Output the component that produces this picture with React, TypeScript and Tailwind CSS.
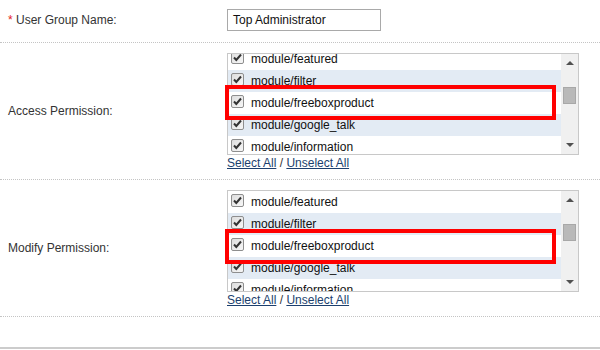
import React from "react";

const items = [
  "module/featured",
  "module/filter",
  "module/freeboxproduct",
  "module/google_talk",
  "module/information",
];

function Check() {
  return (
    <svg width="13" height="13" viewBox="0 0 13 13" className="shrink-0">
      <defs>
        <linearGradient id="cbg" x1="0" y1="0" x2="1" y2="1">
          <stop offset="0" stopColor="#dcdcdc" />
          <stop offset="1" stopColor="#f8f8f8" />
        </linearGradient>
      </defs>
      <rect x="0.5" y="0.5" width="12" height="12" rx="1.5" fill="url(#cbg)" stroke="#8e8e8e" />
      <path d="M3 6.5 L5.3 9 L10 3.5" fill="none" stroke="#333" strokeWidth="2" />
    </svg>
  );
}

function ListBox({ offset, thumbTop }: { offset: string; thumbTop: string }) {
  return (
    <div className="flex h-[102px] w-[352px] border border-[#c8c8c8] bg-white">
      <div className="flex-1 overflow-hidden">
        <div className={offset}>
          {items.map((t, i) => (
            <div
              key={t}
              className={`flex h-[22px] items-center pl-[3px] ${i % 2 === 1 ? "bg-[#e3ebf4]" : "bg-white"}`}
            >
              <div className="-mt-[3px]">
                <Check />
              </div>
              <span className="ml-[7px] text-[12px] text-[#111]">{t}</span>
            </div>
          ))}
        </div>
      </div>
      <div className="relative w-[17px] bg-[#f0f0f0]">
        <div className="absolute left-[5px] top-[7px] h-0 w-0 border-x-[4px] border-b-[4px] border-x-transparent border-b-[#505050]" />
        <div className={`absolute left-[2px] h-[17px] w-[13px] border border-[#a8a8a8] bg-[#b9b9b9] ${thumbTop}`} />
        <div className="absolute bottom-[7px] left-[5px] h-0 w-0 border-x-[4px] border-t-[4px] border-x-transparent border-t-[#505050]" />
      </div>
    </div>
  );
}

function Links() {
  return (
    <div className="mt-[1px] h-[14px] text-[12px] leading-[14px] text-[#333]">
      <a className="text-[#1c3f6e] underline">Select All</a> /{" "}
      <a className="text-[#1c3f6e] underline">Unselect All</a>
    </div>
  );
}

export default function App() {
  return (
    <div className="relative h-[350px] w-[600px] bg-white font-['Liberation_Sans',Arial,sans-serif] text-[12px] text-[#333]">
      <div className="flex h-[43px] items-center border-b border-dotted border-[#c4c4c4] pb-[2px]">
        <div className="w-[227px] pl-[8px]">
          <span className="text-[#e4211c]">*</span> User Group Name:
        </div>
        <div className="flex h-[22px] w-[154px] items-center border border-[#a9a9a9] pl-[5px] text-[12px] text-[#111]">
          Top Administrator
        </div>
      </div>

      <div className="flex h-[137px] border-b border-dotted border-[#c4c4c4]">
        <div className="w-[227px] self-center pl-[8px]">Access Permission:</div>
        <div className="pt-[10px]">
          <ListBox offset="-mt-[6px]" thumbTop="top-[33px]" />
          <Links />
        </div>
      </div>

      <div className="flex h-[137px] border-b border-dotted border-[#c4c4c4]">
        <div className="w-[227px] self-center pl-[8px]">Modify Permission:</div>
        <div className="pt-[10px]">
          <ListBox offset="mt-0" thumbTop="top-[33px]" />
          <Links />
        </div>
      </div>

      <div className="h-[30px]" />
      <div className="h-[2px] bg-[#cccccc]" />

      <div className="pointer-events-none absolute left-[225px] top-[85px] h-[35px] w-[331px] border-[4px] border-[#ff0000]" />
      <div className="pointer-events-none absolute left-[225px] top-[229px] h-[35px] w-[331px] border-[4px] border-[#ff0000]" />
    </div>
  );
}
